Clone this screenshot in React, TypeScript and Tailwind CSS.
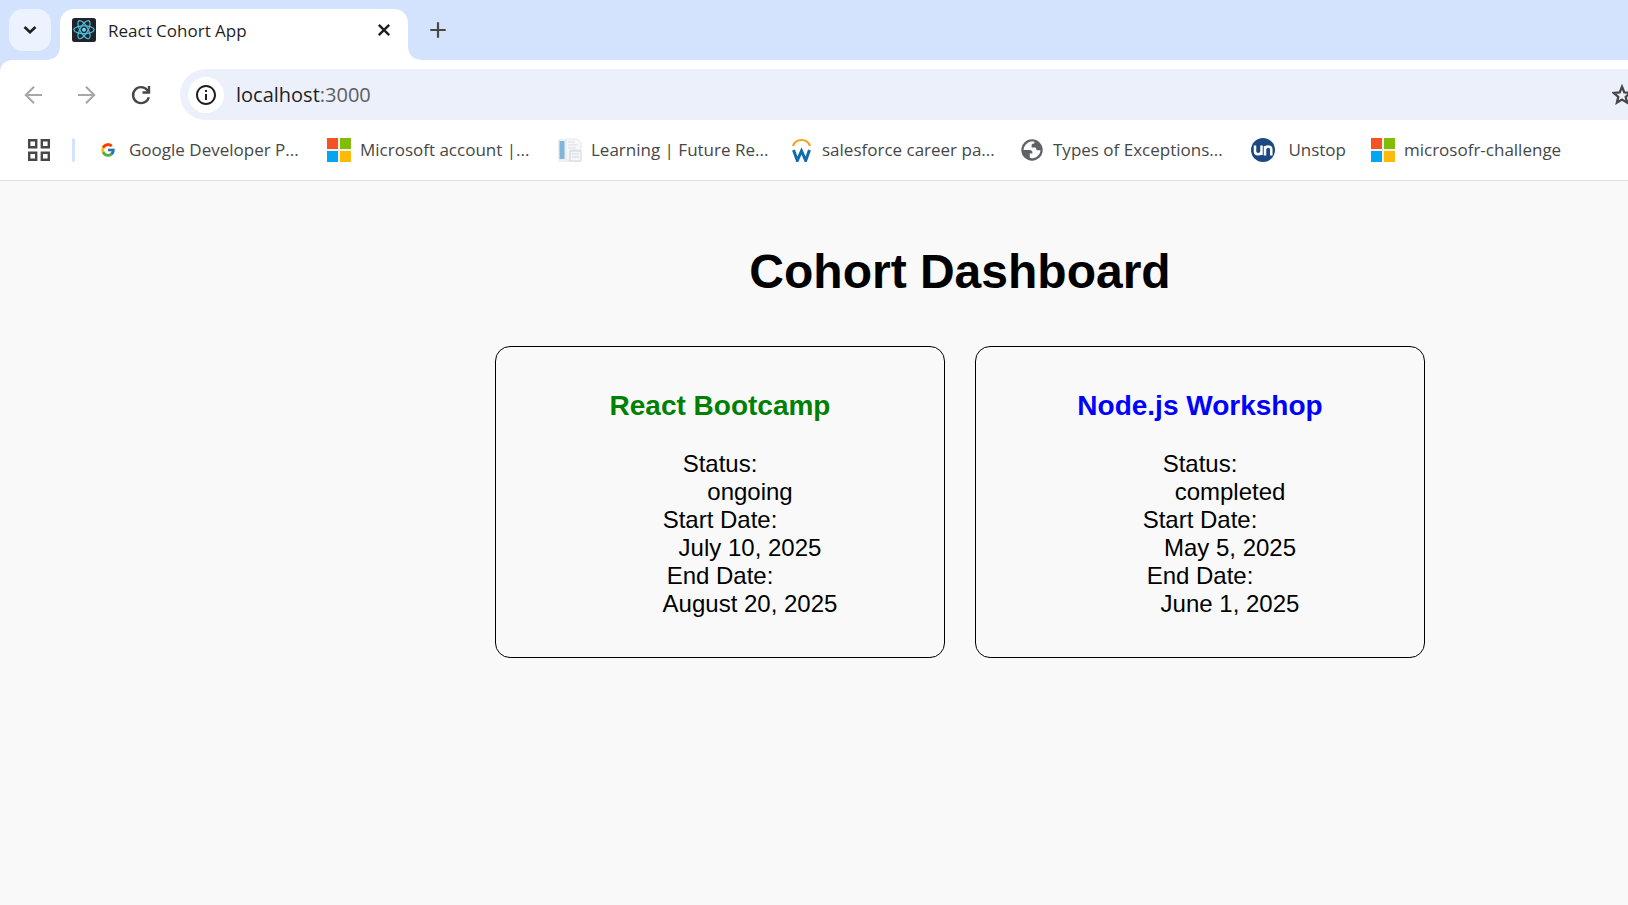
import React from "react";
import { MdInfoOutline } from "react-icons/md";
import { FcGoogle } from "react-icons/fc";

function ReactLogo() {
  return (
    <svg viewBox="0 0 24 24" className="size-6 shrink-0" aria-hidden="true">
      <rect width="24" height="24" rx="2.5" fill="#20232a" />
      <g fill="none" stroke="#4fc0de" strokeWidth="1.2">
        <ellipse cx="12" cy="11.7" rx="10.2" ry="3.9" />
        <ellipse cx="12" cy="11.7" rx="10.2" ry="3.9" transform="rotate(60 12 11.7)" />
        <ellipse cx="12" cy="11.7" rx="10.2" ry="3.9" transform="rotate(120 12 11.7)" />
      </g>
      <circle cx="12" cy="11.7" r="2" fill="#61dafb" />
    </svg>
  );
}

function MicrosoftLogo() {
  return (
    <svg viewBox="0 0 24 24" className="size-6 shrink-0" aria-hidden="true">
      <rect width="24" height="24" fill="#f3f0ec" />
      <rect width="11" height="11" fill="#f35325" />
      <rect x="13" width="11" height="11" fill="#81bc06" />
      <rect y="13" width="11" height="11" fill="#05a6f0" />
      <rect x="13" y="13" width="11" height="11" fill="#ffba08" />
    </svg>
  );
}

function LearningLogo() {
  return (
    <svg viewBox="0 0 24 24" className="size-6 shrink-0" aria-hidden="true">
      <path d="M0 1H18L23 5V24H0Z" fill="#eef0f3" />
      <rect x="1.5" y="3" width="5" height="18" fill="#7fb5da" />
      <path d="M8 1H19L23 5V12H12V22H8Z" fill="#f7f8fa" stroke="#dfe2e7" strokeWidth="0.8" />
      <path d="M10 4H17M10 7H20M10 10H18" stroke="#d9dde2" />
      <path d="M12 13H23V23H12Z" fill="#f4f6f8" stroke="#d0d5dc" />
      <path d="M14 16H21M14 19H21" stroke="#d3d8de" />
    </svg>
  );
}

function CareerLogo() {
  return (
    <svg viewBox="0 0 24 24" className="size-6 shrink-0" fill="none" aria-hidden="true">
      <path d="M4 8C5.5 3.5 9 2 12.500 2S19.500 3.500 21 8" stroke="#f9a11b" strokeWidth="2.2" />
      <path d="M4.500 12L8.300 22.500L12.500 13L16.700 22.500L20.500 12" stroke="#0f6aae" strokeWidth="3" />
    </svg>
  );
}

function GlobeIcon() {
  return (
    <svg viewBox="0 0 24 24" className="size-6 shrink-0" aria-hidden="true">
      <circle cx="12" cy="12" r="10.700" fill="#5f6368" />
      <path
        d="M14.500 3.800C12.300 3.100 9.500 3.500 7.500 4.900C5 6.600 3.600 9.200 3.600 12H9.500C11.500 12 12.400 13 12.400 14.300V15.600H9.800V19.800C10.800 20.200 12 20.400 13.200 20.200C17.500 19.600 20.400 16 20.400 12.300H17.600C16.600 12.300 16.200 11.700 16.200 10.800C16.200 9.800 15.300 9.600 14 9.600H11.600V7.300C11.600 6.200 12.400 5.800 13.300 5.800C14.300 5.800 14.500 5 14.500 3.800Z"
        fill="#fff"
      />
    </svg>
  );
}

function UnstopLogo() {
  return (
    <svg viewBox="0 0 24 24" className="size-6 shrink-0" fill="none" aria-hidden="true">
      <circle cx="12" cy="12" r="12" fill="#1c4980" />
      <path d="M4 7.500V13.500Q4 16.200 7.200 16.200Q10.500 16.200 10.500 13V7.500M10.500 12V17" stroke="#fff" strokeWidth="2.500" />
      <path d="M14 17.500V8M14 11.500Q14 8.500 17.200 8.500Q20.300 8.500 20.300 11.500V17.500" stroke="#fff" strokeWidth="2.500" />
    </svg>
  );
}

const bookmarks = [
  { label: "Google Developer P...", width: "w-[206px]", icon: <span className="flex size-6 shrink-0 items-center justify-center"><FcGoogle className="size-4" /></span> },
  { label: "Microsoft account |...", width: "w-[206px]", icon: <MicrosoftLogo /> },
  { label: "Learning | Future Re...", width: "w-[206px]", icon: <LearningLogo /> },
  { label: "salesforce career pa...", width: "w-[206px]", icon: <CareerLogo /> },
  { label: "Types of Exceptions...", width: "w-[206px]", icon: <GlobeIcon /> },
  { label: "Unstop", width: "w-[95px] justify-between", icon: <UnstopLogo /> },
  { label: "microsofr-challenge", width: "w-[206px]", icon: <MicrosoftLogo /> },
];

const cohorts = [
  { name: "React Bootcamp", color: "text-[#008000]", status: "ongoing", start: "July 10, 2025", end: "August 20, 2025" },
  { name: "Node.js Workshop", color: "text-[#0000ff]", status: "completed", start: "May 5, 2025", end: "June 1, 2025" },
];

export default function App() {
  return (
    <div className="flex min-h-screen flex-col overflow-x-hidden bg-[#f9f9f9] font-['Open_Sans','Noto_Sans',sans-serif]">
      <header className="bg-[#d3e3fd]">
        <div className="flex h-[60px] items-start pt-[9px] pl-[9px]">
          <button aria-label="Search tabs" className="flex size-[42px] items-center justify-center rounded-[14px] bg-[#ecf2fe]">
            <svg viewBox="0 0 14 10" className="h-[10px] w-[14px]" fill="none" aria-hidden="true">
              <path d="M1.500 2L7 7.200L12.500 2" stroke="#1f1f1f" strokeWidth="2.600" />
            </svg>
          </button>
          <div className="relative ml-[9px] flex h-[51px] w-[348px] items-start rounded-t-[14px] bg-white pt-[9px] pr-3 pl-3">
            <svg viewBox="0 0 15 15" className="absolute right-full bottom-0 size-[15px]" aria-hidden="true">
              <path d="M15 0V15H0Q15 15 15 0Z" fill="#fff" />
            </svg>
            <svg viewBox="0 0 15 15" className="absolute bottom-0 left-full size-[15px]" aria-hidden="true">
              <path d="M0 0V15H15Q0 15 0 0Z" fill="#fff" />
            </svg>
            <ReactLogo />
            <span className="ml-3 flex-1 text-[17px] leading-[26px] text-[#1f1f1f]">React Cohort App</span>
            <button aria-label="Close tab" className="flex size-6 items-center justify-center text-[#1f1f1f]">
              <svg viewBox="0 0 24 24" className="size-6" fill="none" stroke="currentColor" strokeWidth="2.400" aria-hidden="true">
                <path d="M6.800 6.800L17.200 17.200M17.200 6.800L6.800 17.200" />
              </svg>
            </button>
          </div>
          <button aria-label="New tab" className="ml-[9px] flex size-[42px] items-center justify-center text-[#474747]">
            <svg viewBox="0 0 24 24" className="size-6" fill="none" stroke="currentColor" strokeWidth="2.200" aria-hidden="true">
              <path d="M12 4.300V19.700M4.300 12H19.700" />
            </svg>
          </button>
        </div>
        <div className="rounded-tl-[12px] border-b border-[#dedfe1] bg-white pt-[9px]">
          <nav aria-label="Browser" className="flex h-[51px] items-center pl-[21px]">
            <button aria-label="Back" className="text-[#a8a8a8]">
              <svg viewBox="0 0 24 24" className="size-6" fill="none" stroke="currentColor" strokeWidth="2.100" aria-hidden="true">
                <path d="M21 12H5M13 3.800L4.800 12L13 20.200" />
              </svg>
            </button>
            <button aria-label="Forward" className="ml-[30px] text-[#a8a8a8]">
              <svg viewBox="0 0 24 24" className="size-6" fill="none" stroke="currentColor" strokeWidth="2.100" aria-hidden="true">
                <path d="M3 12H19M11 3.800L19.200 12L11 20.200" />
              </svg>
            </button>
            <button aria-label="Reload" className="ml-[30px] text-[#474747]">
              <svg viewBox="0 0 24 24" className="size-6" fill="none" stroke="currentColor" strokeWidth="2.400" aria-hidden="true">
                <path d="M19.800 14.200A8 8 0 1 1 18.400 7.200L20 9" />
                <path d="M20 3V9.500H13.500" />
              </svg>
            </button>
            <div className="ml-[27px] flex h-[51px] flex-1 items-center rounded-l-full bg-[#ecf0fa] pl-2">
              <button aria-label="Site information" className="flex size-9 items-center justify-center rounded-full bg-white text-[#1f1f1f]">
                <MdInfoOutline className="size-6" />
              </button>
              <a href="#" className="ml-3 flex-1 text-[20px] text-[#5c5e62]"><span className="text-[#1f1f1f]">localhost</span>:3000</a>
              <button aria-label="Bookmark" className="-mr-2 text-[#474747]">
                <svg viewBox="0 0 24 24" className="size-6" fill="none" stroke="currentColor" strokeWidth="2.300" aria-hidden="true">
                  <path d="M10 3.800L12.300 9.400L18.300 9.900L13.700 13.800L15.100 19.700L10 16.600L4.900 19.700L6.300 13.800L1.700 9.900L7.700 9.400Z" />
                </svg>
              </button>
            </div>
          </nav>
          <div className="flex h-[60px] items-center pl-7">
            <button aria-label="Apps" className="text-[#474747]">
              <svg viewBox="0 0 22 22" className="size-[22px]" fill="none" stroke="currentColor" strokeWidth="2.400" aria-hidden="true">
                <path d="M1.200 1.200H8.200V8.200H1.200ZM13.800 1.200H20.800V8.200H13.800ZM1.200 13.800H8.200V20.800H1.200ZM13.800 13.800H20.800V20.800H13.800Z" />
              </svg>
            </button>
            <span className="mr-[21px] ml-[22px] h-6 w-[3px] rounded-full bg-[#d3e3fd]" />
            <nav aria-label="Bookmarks" className="flex items-center gap-[25px]">
              {bookmarks.map((b) => (
                <a key={b.label} href="#" className={`flex shrink-0 items-center gap-[9px] text-[17px] whitespace-nowrap text-[#474747] ${b.width}`}>
                  {b.icon}
                  {b.label}
                </a>
              ))}
            </nav>
          </div>
        </div>
      </header>
      <main className="flex-1 pt-[63px] pl-[292px] font-['Liberation_Sans',Arial,sans-serif] text-black">
        <h1 className="text-center text-[48px] leading-[55px] font-bold">Cohort Dashboard</h1>
        <div className="mt-[47px] flex justify-center gap-[30px]">
          {cohorts.map((c) => (
            <section key={c.name} className="w-[450px] rounded-[15px] border border-black px-[15px] pt-[43px] pb-[39px] text-center">
              <h3 className={`text-[28px] leading-[32px] font-bold ${c.color}`}>{c.name}</h3>
              <dl className="mt-7 text-[24px] leading-[28px]">
                <dt>Status:</dt>
                <dd className="ml-[60px]">{c.status}</dd>
                <dt>Start Date:</dt>
                <dd className="ml-[60px]">{c.start}</dd>
                <dt>End Date:</dt>
                <dd className="ml-[60px]">{c.end}</dd>
              </dl>
            </section>
          ))}
        </div>
      </main>
    </div>
  );
}
